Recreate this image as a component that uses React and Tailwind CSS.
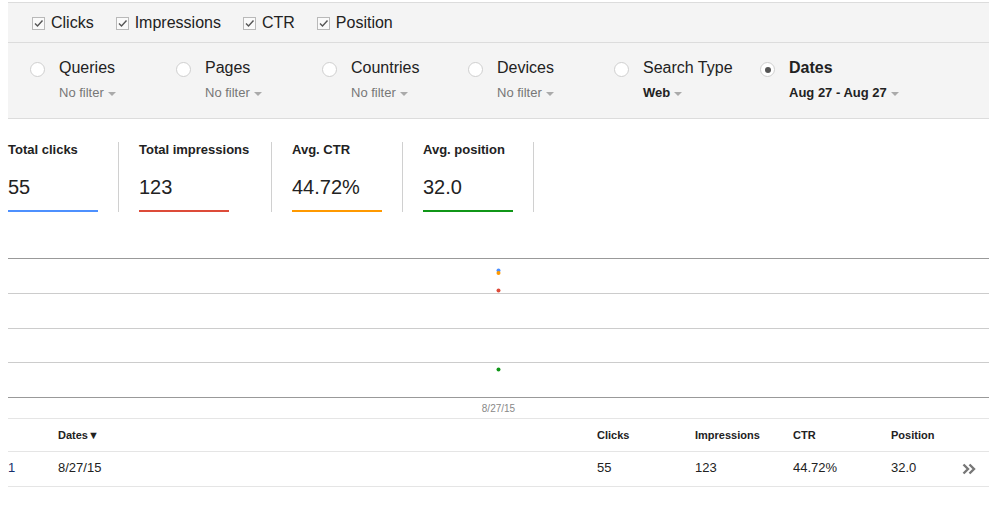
import React from "react";

const Checkbox = () => (
    <svg width="13" height="13" viewBox="0 0 13 13" className="shrink-0">
        <rect x="0.5" y="0.5" width="12" height="12" fill="#fafafa" stroke="#b9b9b9" />
        <path d="M3 6.5l2.5 2.5L10.5 3.5" fill="none" stroke="#555" strokeWidth="1.4" />
    </svg>
);

const Caret = () => (
    <svg width="8" height="4" viewBox="0 0 8 4" className="ml-[4px] mt-[2px] shrink-0">
        <path d="M0 0h8L4 4z" fill="#aaa" />
    </svg>
);

const Radio = ({checked}) => (
    <div className="mt-[4px] flex h-[15px] w-[15px] shrink-0 items-center justify-center rounded-full border border-[#cfcfcf] bg-white">
        {checked && <div className="h-[6px] w-[6px] rounded-full bg-[#555]"></div>}
    </div>
);

const metrics = ["Clicks", "Impressions", "CTR", "Position"];

const filters = [
    {label: "Queries", value: "No filter"},
    {label: "Pages", value: "No filter"},
    {label: "Countries", value: "No filter"},
    {label: "Devices", value: "No filter"},
    {label: "Search Type", value: "Web", set: true},
    {label: "Dates", value: "Aug 27 - Aug 27", set: true, checked: true},
];

const totals = [
    {label: "Total clicks", value: "55", bar: "bg-[#4d90fe]", width: "w-[90px]"},
    {label: "Total impressions", value: "123", bar: "bg-[#dd4b39]", width: "w-[112px]"},
    {label: "Avg. CTR", value: "44.72%", bar: "bg-[#ff9900]", width: "w-[90px]"},
    {label: "Avg. position", value: "32.0", bar: "bg-[#109618]", width: "w-[90px]"},
];

const App = () => {
    return (
        <div className="min-h-[505px] bg-white pl-2 pr-1 pt-[2px] font-['Liberation_Sans',Arial,sans-serif] text-[#222]">

            {/* query panel */}
            <div className="border-y border-[#dcdcdc] bg-[#f4f4f4]">
                <div className="flex h-[40px] items-center gap-[22px] border-b border-[#dcdcdc] pl-[24px] pt-[1px]">
                    {metrics.map((m) => (
                        <label key={m} className="flex items-center gap-[6px] text-[16px] leading-[20px]">
                            <Checkbox />
                            <span>{m}</span>
                        </label>
                    ))}
                </div>

                <div className="flex h-[75px] pl-[22px] pt-[15px]">
                    {filters.map((f) => (
                        <div key={f.label} className="flex w-[146px] gap-[14px]">
                            <Radio checked={f.checked} />
                            <div className="flex flex-col">
                                <span className={`text-[16px] leading-[20px] ${f.checked ? 'font-bold' : ''}`}>{f.label}</span>
                                <span className={`mt-[7px] flex items-center text-[13px] leading-[16px] ${f.set ? 'font-bold text-[#222]' : 'text-[#777]'}`}>
                                    {f.value}
                                    <Caret />
                                </span>
                            </div>
                        </div>
                    ))}
                </div>
            </div>

            {/* totals */}
            <div className="mt-[23px] flex">
                {totals.map((t, i) => (
                    <div key={t.label} className={`flex h-[70px] flex-col border-r border-[#d0d0d0] pr-[20px] ${i === 0 ? '' : 'pl-[20px]'}`}>
                        <span className={`${t.width} text-[13px] font-bold leading-[15px]`}>{t.label}</span>
                        <span className="mt-[19px] text-[20px] leading-[23px]">{t.value}</span>
                        <div className={`mt-[11px] h-[2px] w-[90px] ${t.bar}`}></div>
                    </div>
                ))}
            </div>

            {/* chart */}
            <div className="mt-[46px]">
                <svg width="981" height="141" viewBox="0 0 981 141" className="block">
                    <line x1="0" y1="0.5" x2="981" y2="0.5" stroke="#999" />
                    <line x1="0" y1="35.5" x2="981" y2="35.5" stroke="#ccc" />
                    <line x1="0" y1="70.5" x2="981" y2="70.5" stroke="#ccc" />
                    <line x1="0" y1="104.5" x2="981" y2="104.5" stroke="#ccc" />
                    <line x1="0" y1="139.5" x2="981" y2="139.5" stroke="#999" />
                    <circle cx="490.5" cy="12.5" r="2" fill="#4d90fe" />
                    <circle cx="490.5" cy="15" r="2" fill="#ff9900" />
                    <circle cx="490.5" cy="32.5" r="2" fill="#dd4b39" />
                    <circle cx="490.5" cy="111.5" r="2" fill="#109618" />
                </svg>
                <div className="flex h-[19px] items-center justify-center text-[10px] text-[#888]">8/27/15</div>
            </div>

            {/* rows */}
            <div className="border-t border-[#e5e5e5] text-[13px]">
                <div className="grid h-[33px] grid-cols-[50px_539px_98px_98px_98px_1fr] items-center border-b border-[#e5e5e5] text-[11px] font-bold">
                    <span></span>
                    <span>Dates▼</span>
                    <span>Clicks</span>
                    <span>Impressions</span>
                    <span>CTR</span>
                    <span>Position</span>
                </div>
                <div className="grid h-[35px] grid-cols-[50px_539px_98px_98px_98px_1fr] items-center border-b border-[#e5e5e5] pb-[2px]">
                    <span className="text-[#16306e]">1</span>
                    <span>8/27/15</span>
                    <span>55</span>
                    <span>123</span>
                    <span>44.72%</span>
                    <span className="flex items-center">
                        32.0
                        <svg width="14" height="12" viewBox="0 0 14 12" className="ml-[46px] mt-[2px]">
                            <path d="M1.5 1.5l4.5 4.5-4.5 4.5M7.5 1.5l4.5 4.5-4.5 4.5" fill="none" stroke="#777" strokeWidth="2.4" />
                        </svg>
                    </span>
                </div>
            </div>
        </div>
    );
};

export default App;
